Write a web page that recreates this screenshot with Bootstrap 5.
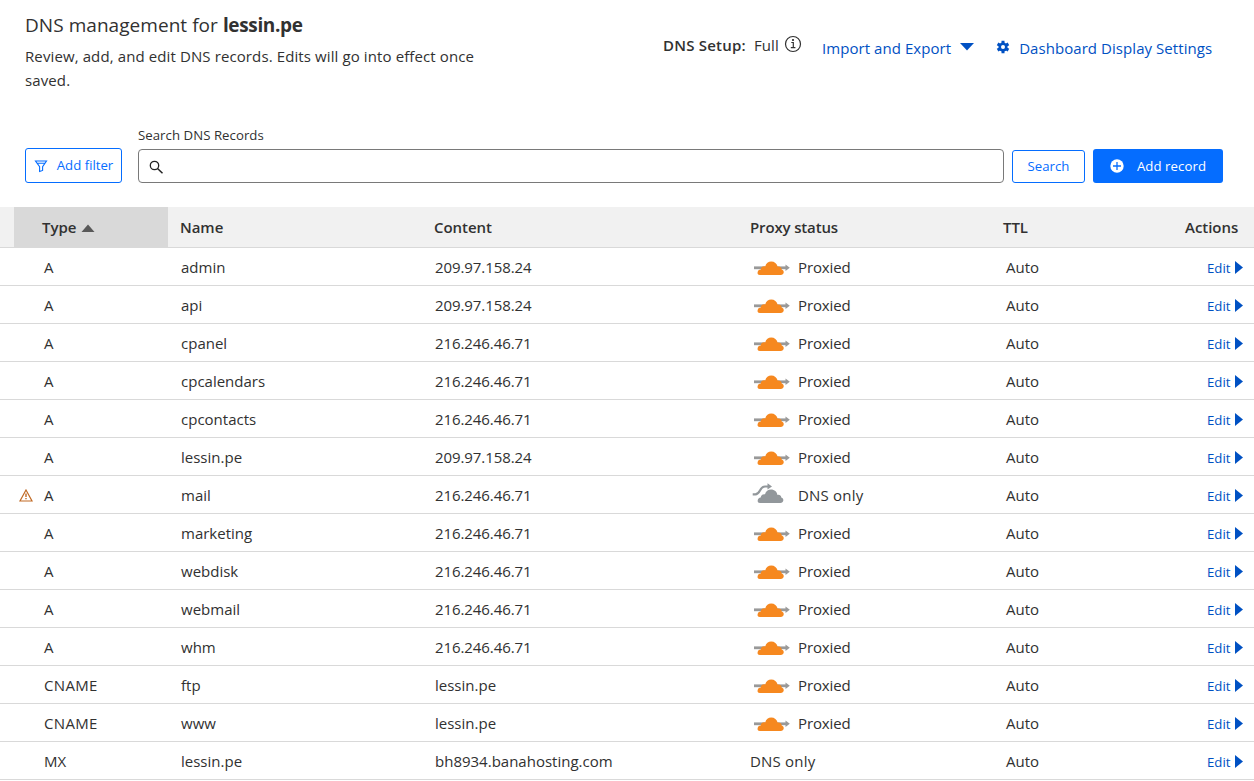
<!DOCTYPE html>
<html lang="en">
<head>
<meta charset="utf-8">
<meta name="viewport" content="width=device-width, initial-scale=1">
<title>DNS management</title>
<link href="https://cdn.jsdelivr.net/npm/bootstrap@5.3.0/dist/css/bootstrap.min.css" rel="stylesheet">
<style>
  body { font-family: "Open Sans", "Noto Sans", sans-serif; font-size: 15px; line-height: 24px; color: #313131; background: #fff; overflow: hidden; }
  .link-blue { color: #0051c3; text-decoration: none; white-space: nowrap; }
  .page-head { height: 125px; padding: 12px 0 0 25px; }
  .page-title { font-size: 19px; line-height: 26px; margin: 0 0 6px; }
  .page-title b { letter-spacing: -.35px; }
  .page-title span { letter-spacing: .05px; }
  .intro { width: 480px; margin: 0; }
  .intro p { letter-spacing: .11px; }
  .head-tools { margin-left: 158px; height: 24px; margin-top: 21px; width: 139px; letter-spacing: .12px; white-space: nowrap; }
  .tool-semi { font-weight: 600; letter-spacing: .22px; }
  .head-link { letter-spacing: .06px; }
  .toolbar { padding: 0 31px 24px 25px; height: 82px; font-size: 13.2px; }
  .toolbar label { line-height: 20px; margin-bottom: 4px; display: block; letter-spacing: .05px; }
  .toolbar .btn { font-size: 13.2px; line-height: 20px; border-radius: 3px; padding: 0 0 2px; white-space: nowrap; }
  .btn-line { color: #056dff; border: 1px solid #056dff; background: #fff; }
  .btn-solid { color: #fff; background: #056dff; border: 0; }
  .btn-filter { width: 97px; height: 35px; }
  .btn-filter svg { margin-top: 2px; }
  .btn-search { width: 73px; height: 33px; margin-left: 8px; }
  .btn-add { width: 130px; height: 34px; margin-left: 8px; }
  .toolbar .btn-add { padding-bottom: 0; }
  .search-box { height: 34px; border: 1px solid #797979; border-radius: 4px; padding: 3px 0 0 10px; }
  .dns-table { table-layout: fixed; width: 1254px; margin: 0; border-collapse: separate; border-spacing: 0; color: #313131; }
  .dns-table th, .dns-table td { padding: 0; border: 0; border-bottom: 1px solid #d9d9d9; vertical-align: middle; white-space: nowrap; }
  .dns-table th { height: 41px; background: #f1f1f1; font-weight: 600; letter-spacing: -.05px; }
  .dns-table th.sorted { background: #d9d9d9; }
  .dns-table td { height: 38px; padding-left: 1px; padding-top: 1px; }
  .ip { letter-spacing: -.08px; }
  .caps { letter-spacing: .35px; }
  .edit-link { font-size: 13.2px; padding: 1px 0 0 21px; }
  svg { display: block; flex: none; }
</style>
</head>
<body>
<svg width="0" height="0" class="position-absolute" aria-hidden="true">
  <symbol id="cloud-on" viewBox="0 0 38 16">
    <path d="M1 6.400h32v2.800H1z" fill="#999"/><path d="M32.500 4.600l4.300 3.200-4.300 3.200z" fill="#999"/>
    <path d="M6.800 15c-1.700 0-2.500-1-2.200-2.500.2-1.800 1.300-2.800 3.200-2.900-.1-2.100 1.700-3.800 4.400-3.100C13 3.300 15.400 1.500 18.200 1.500c3.300 0 5.700 2 6.400 5 2.300-.4 4 .8 4.100 3 1.500.5 2.200 1.600 2 3-.2 1.600-1.300 2.500-2.900 2.500z" fill="#f6881f"/>
  </symbol>
  <symbol id="cloud-off" viewBox="0 0 32 20">
    <path d="M.7 11.400h2.700c2.500 0 3.300-1.500 4.600-3.900 1.300-2.500 2.400-4 5-4h3.500" fill="none" stroke="#92979b" stroke-width="2.200"/><path d="M15.500.2l4.500 3.200-4.500 3.200z" fill="#92979b"/>
    <path d="M8 20c-1.700 0-2.500-1-2.300-2.400.2-1.700 1.200-2.900 3-3 .3-2.100 1.800-3.700 4.300-3.300.7-2.900 3.200-4.800 6-4.800 3.500 0 6 2.300 6.400 5.500 2-.5 3.700.5 3.900 2.400 1.600.5 2.200 1.700 2 3.100-.2 1.600-1.300 2.500-2.900 2.500z" fill="#92979b"/>
  </symbol>
</svg>

<header class="page-head d-flex align-items-start">
  <div class="intro">
    <h1 class="page-title fw-normal"><span>DNS management for </span><b>lessin.pe</b></h1>
    <p class="mb-0">Review, add, and edit DNS records. Edits will go into effect once<br>saved.</p>
  </div>
  <div class="head-tools d-flex">
    <span class="tool-semi">DNS Setup:</span><span class="ms-2">Full</span>
    <svg width="18" height="18" viewBox="0 0 18 18" fill="none" stroke="#313131" stroke-width="1.200" style="margin:2px 0 0 5px"><circle cx="9" cy="9" r="7.500"/><path d="M7.300 7.500h2v5M6.800 12.600h4.600"/><circle cx="9" cy="5" r=".5" fill="#313131"/></svg>
  </div>
  <a class="link-blue head-link d-flex mt-4" href="#" style="margin-left:20px">Import and Export
    <svg width="14" height="8" viewBox="0 0 14 8" style="margin:7px 0 0 9px"><path d="M0 0h14L7 7.500z" fill="#0051c3"/></svg></a>
  <a class="link-blue head-link d-flex mt-4" href="#" style="margin-left:22px">
    <svg width="14" height="14" viewBox="0 0 14 14" style="margin:4px 9px 0 0"><g stroke="#0051c3" stroke-width="3"><path d="M7 .7v12.600M1.540 3.850l10.920 6.300M1.540 10.150l10.920-6.300"/></g><circle cx="7" cy="7" r="4.500" fill="#0051c3"/><circle cx="7" cy="7" r="2" fill="#fff"/></svg>Dashboard Display Settings</a>
</header>

<section class="toolbar d-flex align-items-end">
  <button class="btn btn-line btn-filter d-flex align-items-center justify-content-center" type="button">
    <svg width="14" height="14" viewBox="0 0 14 14" fill="none" stroke="#056dff" stroke-width="1.100"><path d="M1.500 2H12.500L8.600 7.600v3.800l-3 1V7.600zM3.200 4.300h7.500"/></svg><span style="margin-left:9px">Add filter</span></button>
  <div class="flex-grow-1 ms-3">
    <label>Search DNS Records</label>
    <div class="search-box d-flex align-items-center"><svg width="15" height="15" viewBox="0 0 15 15" fill="none" stroke="#222" stroke-width="1.300"><circle cx="5.500" cy="5.500" r="4.200"/><path d="M8.500 8.500l5 4.700" stroke-width="1.500"/></svg></div>
  </div>
  <button class="btn btn-line btn-search" type="button">Search</button>
  <button class="btn btn-solid btn-add d-flex align-items-center justify-content-center" type="button">
    <svg width="14" height="14" viewBox="0 0 14 14"><circle cx="7" cy="7" r="6.700" fill="#fff"/><path d="M7 3v8M3 7h8" stroke="#056dff" stroke-width="1.300"/></svg><span style="margin-left:13px;letter-spacing:.08px">Add record</span></button>
</section>

<table class="dns-table">
  <colgroup><col style="width:14px"><col style="width:29px"><col style="width:125px"><col style="width:12px"><col style="width:254px"><col style="width:316px"><col style="width:253px"><col style="width:182px"><col></colgroup>
  <thead><tr><th></th><th class="sorted" colspan="2"><div class="d-flex align-items-center" style="padding-left:28px">Type<svg width="14" height="8" viewBox="0 0 14 8" style="margin:1px 0 0 5px"><path d="M.5 8h13L7 .5z" fill="#595959"/></svg></div></th><th></th><th>Name</th><th>Content</th><th><span style="letter-spacing:-.15px">Proxy status</span></th><th>TTL</th><th>Actions</th></tr></thead>
  <tbody id="records"></tbody>
</table>

<script>
const records = [
  ["A", "admin", "209.97.158.24", "on"],
  ["A", "api", "209.97.158.24", "on"],
  ["A", "cpanel", "216.246.46.71", "on"],
  ["A", "cpcalendars", "216.246.46.71", "on"],
  ["A", "cpcontacts", "216.246.46.71", "on"],
  ["A", "lessin.pe", "209.97.158.24", "on"],
  ["A", "mail", "216.246.46.71", "off"],
  ["A", "marketing", "216.246.46.71", "on"],
  ["A", "webdisk", "216.246.46.71", "on"],
  ["A", "webmail", "216.246.46.71", "on"],
  ["A", "whm", "216.246.46.71", "on"],
  ["CNAME", "ftp", "lessin.pe", "on"],
  ["CNAME", "www", "lessin.pe", "on"],
  ["MX", "lessin.pe", "bh8934.banahosting.com", "none"]
];
const warn = '<svg width="14" height="13" viewBox="0 0 14 13" fill="none" stroke="#c16a25" style="margin-left:4px"><path d="M7 1L13 12H1z" stroke-width="1.200"/><path d="M7 4.500v3.500M7 9v1.300" stroke-width="1.400"/></svg>';
const proxy = {
  on: '<div class="d-flex align-items-center"><svg width="38" height="16" style="margin:1px 7px 0 2px"><use href="#cloud-on"/></svg><span style="letter-spacing:-.12px">Proxied</span></div>',
  off: '<div class="d-flex align-items-center"><svg width="32" height="20" style="margin:-5px 14px 0 1px"><use href="#cloud-off"/></svg><span style="letter-spacing:.2px">DNS only</span></div>',
  none: '<div style="margin-left:-1px;letter-spacing:.2px">DNS only</div>'
};
document.getElementById("records").innerHTML = records.map(([type, name, content, status]) =>
  `<tr><td></td><td>${status === "off" ? warn : ""}</td><td class="${type.length > 2 ? "caps" : ""}">${type}</td><td></td><td>${name}</td><td class="${/^\d/.test(content) ? "ip" : ""}">${content}</td><td>${proxy[status]}</td><td><span style="padding-left:2px">Auto</span></td><td><a href="#" class="link-blue edit-link d-flex align-items-center">Edit<svg width="8" height="13" viewBox="0 0 8 13" style="margin-left:5px"><path d="M0 0l8 6.500L0 13z" fill="#0051c3"/></svg></a></td></tr>`).join("");
</script>
<script src="https://cdn.jsdelivr.net/npm/bootstrap@5.3.0/dist/js/bootstrap.bundle.min.js"></script>
</body>
</html>
